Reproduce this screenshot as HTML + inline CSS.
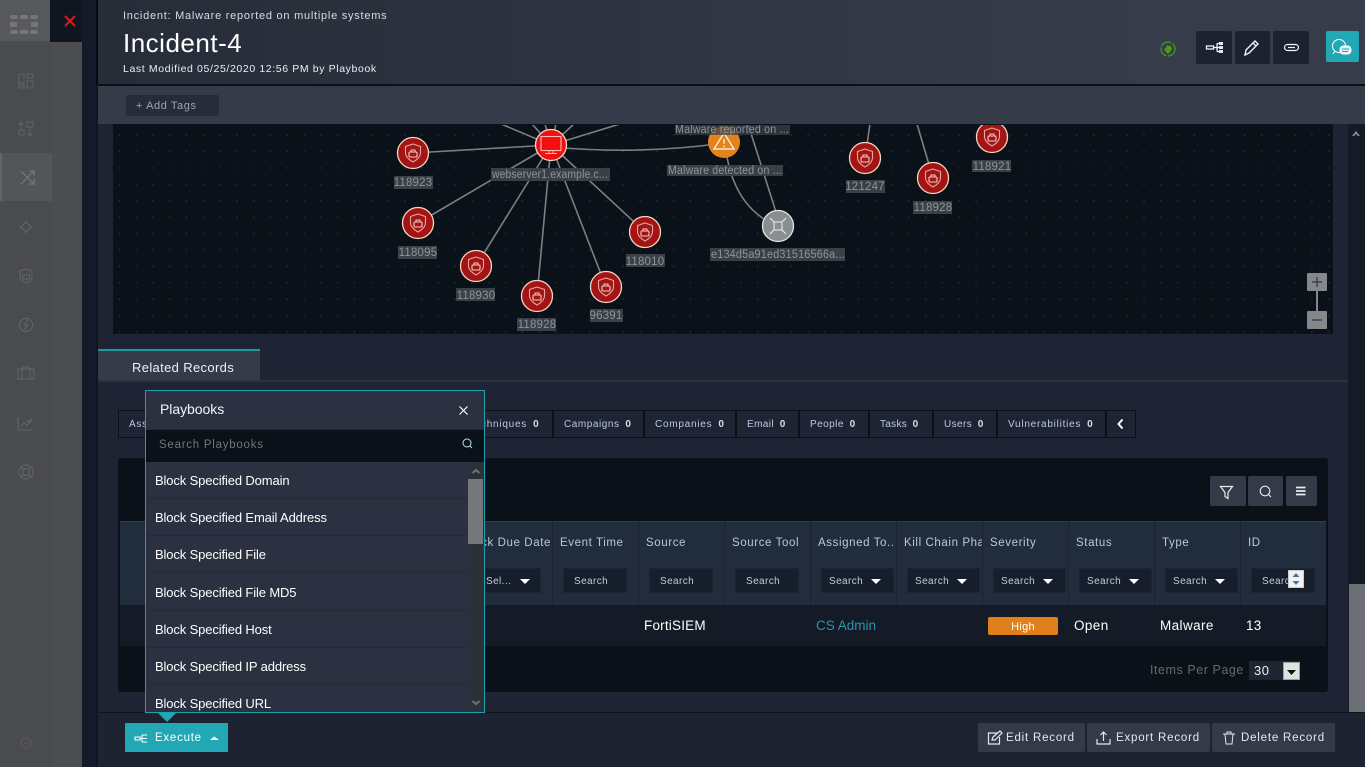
<!DOCTYPE html>
<html lang="en"><head><meta charset="utf-8"><title>Incident-4</title>
<style>
html,body{margin:0;padding:0;width:1365px;height:767px;overflow:hidden;background:#1e2433}
body{position:relative;font-family:"Liberation Sans",sans-serif;color:#fff}
.a{position:absolute}
.t{position:absolute;white-space:nowrap;line-height:1}
.box{position:absolute;box-sizing:border-box}
.chip{position:absolute;top:410px;height:28px;box-sizing:border-box;border:1px solid #0b1017;background:#1e2433;font-size:10px;letter-spacing:.75px;color:#b9cbdc;line-height:28px;padding-left:10px;white-space:nowrap}
.chip b{font-weight:bold;margin-left:2.500px;color:#d7dfe6}
.th{position:absolute;top:537px;font-size:11.500px;letter-spacing:.6px;color:#b9c9d8;white-space:nowrap;line-height:12px}
.inp{position:absolute;top:568px;height:25px;box-sizing:border-box;background:#171e2b;border:1px solid #1b2432;font-size:10px;letter-spacing:.4px;color:#c0ccd7;line-height:25px;white-space:nowrap;overflow:hidden}
.car{position:absolute;top:579px;width:0;height:0;border-left:5px solid transparent;border-right:5px solid transparent;border-top:5px solid #fff}
.sep{position:absolute;top:521px;width:1px;height:84px;background:#1a2331}
.pb{position:absolute;left:155px;font-size:13px;color:#fff;white-space:nowrap;line-height:16px;letter-spacing:-.13px}
.pl{position:absolute;left:147px;width:321px;height:1px;background:#242a36}
.ib{position:absolute;top:31px;height:33px;background:#1c2330;border-radius:2px}
.btn{position:absolute;top:723px;height:29px;background:#333a48;border-radius:2px;font-size:11.500px;letter-spacing:.8px;color:#e6e9ec;line-height:31px;white-space:nowrap}
.sq{position:absolute;top:476px;height:30px;background:#333a48;border-radius:2px}
svg{position:absolute;overflow:visible}
</style></head><body>

<!-- sidebar -->
<div class="box" style="left:0;top:0;width:82px;height:767px;background:#4a4b4d"></div>
<div class="box" style="left:0;top:0;width:50px;height:41px;background:#58595b"></div>
<div class="box" style="left:52px;top:41px;width:30px;height:726px;background:#4c4d4f"></div>
<div class="box" style="left:0;top:153px;width:52px;height:48px;background:#545557;border-left:2px solid #646567"></div>
<div class="box" style="left:50px;top:0;width:32px;height:42px;background:#0f1620"></div>
<div class="box" style="left:82px;top:0;width:15px;height:767px;background:#141b28"></div>
<div class="box" style="left:96px;top:0;width:2px;height:84px;background:#07090d"></div>
<div class="box" style="left:96px;top:84px;width:2px;height:683px;background:#10151e"></div>

<svg style="left:0;top:0" width="82" height="767" fill="none">
 <g fill="#757678">
  <rect x="10" y="15" width="8" height="4" rx="2"/><rect x="20" y="15" width="8" height="4" rx="1"/><rect x="30" y="15" width="8" height="4" rx="2"/>
  <rect x="10" y="22" width="7" height="5"/><rect x="31" y="22" width="7" height="5"/>
  <rect x="10" y="30" width="8" height="4" rx="2"/><rect x="20" y="30" width="8" height="4" rx="1"/><rect x="30" y="30" width="8" height="4" rx="2"/>
 </g>
 <path d="M65 16l10 10M75 16L65 26" stroke="#e01818" stroke-width="2"/>
 <g stroke="#5f6368" stroke-width="1">
  <rect x="19" y="74" width="5" height="9"/><rect x="27" y="74" width="6" height="4"/><rect x="19" y="85" width="5" height="3"/><rect x="27" y="81" width="6" height="7"/>
  <path d="M21 122v9M18.500 125l2.500-3 2.500 3M30 127v9M27.500 133l2.500 3 2.500-3"/><rect x="27" y="122" width="6" height="5"/><rect x="19" y="130" width="5" height="5"/>
 </g>
 <g stroke="#767779" stroke-width="1.200">
  <path d="M21 171l13 13M21 184l13-13M29 171h5v5M29 184h5v-5"/>
 </g>
 <g stroke="#64666a" stroke-width="1">
  <path d="M26 222l-5 5 5 5 5-5zM26 220v3M26 231v3M19 227h3M30 227h3"/>
  <path d="M26 269l6 2v6c0 3-3 5-6 6-3-1-6-3-6-6v-6z"/><rect x="22.500" y="275" width="7" height="4"/>
  <circle cx="26" cy="325" r="6.500"/><path d="M28 320l-4 5h4l-4 5"/>
  <rect x="18" y="369" width="16" height="10"/><path d="M22 369v10M30 369v10M23 369v-2h6v2"/>
  <path d="M18 417v13h15M20 427l4-4 3 2 5-5M27 420l2 2 3-4"/>
  <circle cx="26" cy="472" r="7"/><circle cx="26" cy="472" r="3.500"/><path d="M21 467l3 3M31 467l-3 3M21 477l3-3M31 477l-3-3"/>
  <circle cx="26" cy="743" r="5" stroke="#5a5b5e"/><path d="M24 743h4" stroke="#5a5b5e"/>
 </g>
</svg>

<!-- header -->
<div class="box" style="left:98px;top:0;width:1267px;height:84px;background:linear-gradient(90deg,#272c39,#2e3441 40%,#363c4a 85%)"></div>
<div class="box" style="left:98px;top:84px;width:1267px;height:2px;background:#0c1016"></div>
<div class="box" style="left:98px;top:86px;width:1267px;height:38px;background:#353b49"></div>
<div class="t" style="left:123px;top:11px;font-size:11px;letter-spacing:.75px;color:#d8dbdf">Incident: Malware reported on multiple systems</div>
<div class="t" style="left:123px;top:30px;font-size:26px;letter-spacing:.5px;color:#fff">Incident-4</div>
<div class="t" style="left:123px;top:64px;font-size:10.500px;letter-spacing:.62px;color:#eceef0">Last Modified 05/25/2020 12:56 PM by Playbook</div>
<div class="box" style="left:126px;top:95px;width:93px;height:21px;background:#262c39;border-radius:2px"></div>
<div class="t" style="left:136px;top:101px;font-size:11px;letter-spacing:.6px;color:#9ea4ad">+ Add Tags</div>

<svg style="left:1160px;top:41px" width="16" height="16" fill="none"><circle cx="8" cy="8" r="7" stroke="#4c9a1a" stroke-width="1.200" stroke-dasharray="11 1.500"/><path d="M4 8l2-1 1-3 2 1 2 0 1 3-2 3-2 2-2-2z" fill="#4c9a1a"/></svg>
<div class="ib" style="left:1196px;width:36px"></div>
<div class="ib" style="left:1235px;width:35px"></div>
<div class="ib" style="left:1273px;width:36px"></div>
<div class="a" style="left:1326px;top:31px;width:33px;height:31px;background:#22a8b4;border-radius:2px"></div>
<svg style="left:1196px;top:31px" width="170" height="33" fill="none" stroke="#f0f2f5">
 <g stroke-width="1.300"><rect x="10.500" y="15" width="7" height="3"/><path d="M17 16.500h4M21 12.500v8M21 12.500h2M21 16.500h2M21 20.500h2"/></g>
 <g fill="#e4e8ec" stroke="none"><rect x="23" y="11" width="4" height="3"/><rect x="23" y="15" width="4" height="3"/><rect x="23" y="19" width="4" height="3"/></g>
 <path d="M49 24l1-5 9-9 3 3-9 9zM57 12l3 3" stroke-width="1.400"/>
 <rect x="88.500" y="13.500" width="14" height="6" rx="3" stroke-width="1.200"/><path d="M92 16.500h7" stroke-width="1.200"/>
 <g stroke="#fff" stroke-width="1"><circle cx="143" cy="15" r="6.500"/><path d="M139 20l-2 3"/><rect x="144" y="15" width="11" height="8" rx="3.500" fill="#dff1f3"/><path d="M146 18h7M146 20.500h6" stroke="#22a8b4"/></g>
</svg>

<!-- graph -->
<div class="box" style="left:113px;top:124px;width:1220px;height:210px;background-color:#0b1118;background-image:radial-gradient(circle,#2c323b 0.6px,transparent 0.9px);background-size:16.800px 16.400px;background-position:-2px 3px"></div>
<div class="box" style="left:1348px;top:124px;width:17px;height:588px;background:#141b26"></div>
<div class="box" style="left:1349px;top:584px;width:16px;height:128px;background:#6d7074"></div>
<svg style="left:1350px;top:128px" width="12" height="10"><path d="M2 8l4-5 4 5H8L6 6 4 8z" fill="#8a8d92"/></svg>

<svg style="left:0;top:0" width="1365" height="340" fill="none">
 <defs><clipPath id="c"><rect x="113" y="125" width="1220" height="209"/></clipPath>
 <g id="n" fill="none"><circle r="15.500" fill="#a41414" stroke="#f1d6c4" stroke-width="1.300"/><path d="M0-9l7.500 2.500v6C7.500 3.500 4 7 0 9c-4-2-7.500-5.500-7.500-9.500v-6z" stroke="#dfa9a2" stroke-width="1.100"/><rect x="-4" y="-1" width="8" height="5" rx="1" stroke="#f0cdc6" stroke-width="1.100"/><path d="M-2-1v-2h4v2" stroke="#f0cdc6"/></g></defs>
 <g clip-path="url(#c)">
  <g stroke="#7d8083" stroke-width="1.600">
   <path d="M501 124L551 145M532 124L551 145M545 124L551 145M556 124L551 145M574 124L551 145M620 124L551 145"/>
   <path d="M413 153L551 145M418 223L551 145M476 266L551 145M537 296L551 145M606 287L551 145M645 232L551 145"/>
   <path d="M551 147Q640 155 724 143"/>
   <path d="M727 157Q735 200 764 219"/>
   <path d="M748 124L776 212"/>
   <path d="M870 124L865 158M917 124L933 178"/>
  </g>
  <g font-family="Liberation Sans,sans-serif" font-size="11.500" fill="#8f9499" text-anchor="middle" letter-spacing=".2">
   <g fill="#3a4048">
    <rect x="394" y="176" width="39" height="13"/><rect x="398" y="246" width="39" height="13"/><rect x="456" y="288" width="39" height="13"/><rect x="517" y="318" width="39" height="13"/><rect x="590" y="309" width="33" height="13"/><rect x="626" y="254" width="39" height="13"/>
    <rect x="491" y="168" width="119" height="13"/><rect x="667" y="165" width="116" height="11"/><rect x="710" y="248" width="135" height="13"/><rect x="846" y="180" width="39" height="13"/><rect x="913" y="201" width="39" height="13"/><rect x="972" y="160" width="39" height="12"/>
   </g>
   <use href="#n" x="413" y="153"/><use href="#n" x="418" y="223"/><use href="#n" x="476" y="266"/><use href="#n" x="537" y="296"/><use href="#n" x="606" y="287"/><use href="#n" x="645" y="232"/><use href="#n" x="865" y="158"/><use href="#n" x="933" y="178"/><use href="#n" x="992" y="137"/>
   <g transform="translate(551 145)" fill="none"><circle r="15.500" fill="#f01010" stroke="#f4d8c8" stroke-width="1.300"/><rect x="-10" y="-8.500" width="20" height="14" stroke="#f8bdb5" stroke-width="1.100"/><path d="M-2 6v2M2 6v2M-6 8.500h12" stroke="#f8bdb5"/></g>
   <g transform="translate(724 142)" fill="none"><circle r="16" fill="#e2831c"/><path d="M0-9L10 7H-10z" stroke="#fff3df" stroke-width="1.300"/><path d="M0-3v5M0 3.500v2" stroke="#fff3df" stroke-width="1.200"/></g>
   <rect x="675" y="124" width="115" height="11" fill="#3a4048" fill-opacity=".75"/>
   <g transform="translate(778 226)" fill="none"><circle r="15.500" fill="#8a8e90" stroke="#dde5e0" stroke-width="1.300"/><path d="M-4-4h8v8h-8zM-4-4l-4-4M4-4l4-4M-4 4l-4 4M4 4l4 4" stroke="#eef0f0"/></g>
   <text x="413" y="186">118923</text><text x="418" y="256">118095</text><text x="476" y="299">118930</text><text x="537" y="328">118928</text><text x="606" y="319">96391</text><text x="645" y="265">118010</text>
   <text x="550" y="178" textLength="116" lengthAdjust="spacingAndGlyphs">webserver1.example.c...</text>
   <text x="732" y="133" textLength="114" lengthAdjust="spacingAndGlyphs">Malware reported on ...</text>
   <text x="725" y="174" textLength="114" lengthAdjust="spacingAndGlyphs">Malware detected on ...</text>
   <text x="778" y="258" textLength="134" lengthAdjust="spacingAndGlyphs">e134d5a91ed31516566a...</text>
   <text x="865" y="190">121247</text><text x="933" y="211">118928</text><text x="992" y="170">118921</text>
  </g>
 </g>
 <rect x="1307" y="273" width="20" height="18" rx="1" fill="#85888b"/><rect x="1307" y="311" width="20" height="18" rx="1" fill="#85888b"/><rect x="1316" y="291" width="2" height="20" fill="#85888b"/>
 <path d="M1312 282h10M1317 277v10M1312 320h10" stroke="#2c3846" stroke-width="1.200"/>
</svg>

<!-- Tab -->
<div class="box" style="left:98px;top:349px;width:162px;height:32px;background:#353b49;border-top:2px solid #1e9aa6"></div>
<div class="t" style="left:132px;top:361px;font-size:13px;letter-spacing:.35px;color:#eef0f2">Related Records</div>
<div class="box" style="left:98px;top:380px;width:1250px;height:2px;background:#2b3240"></div>

<!-- chips -->
<div class="chip" style="left:118px;width:30px;padding-left:10px">Ass</div>
<div class="chip" style="left:440px;width:113px;padding-left:40px">chniques <b>0</b></div>
<div class="chip" style="left:553px;width:91px;letter-spacing:.55px">Campaigns <b>0</b></div>
<div class="chip" style="left:644px;width:92px">Companies <b>0</b></div>
<div class="chip" style="left:736px;width:63px;letter-spacing:.4px">Email <b>0</b></div>
<div class="chip" style="left:799px;width:70px;letter-spacing:.45px">People <b>0</b></div>
<div class="chip" style="left:869px;width:64px;letter-spacing:.3px">Tasks <b>0</b></div>
<div class="chip" style="left:933px;width:64px;letter-spacing:.4px">Users <b>0</b></div>
<div class="chip" style="left:997px;width:109px">Vulnerabilities <b>0</b></div>
<div class="chip" style="left:1106px;width:30px"></div>
<svg style="left:1116px;top:418px" width="10" height="12"><path d="M6.500 1.500L2.500 6l4 4.500" stroke="#fff" stroke-width="2" fill="none"/></svg>

<!-- table -->
<div class="box" style="left:118px;top:458px;width:1210px;height:234px;background:#0b1118;border-radius:3px"></div>
<div class="box" style="left:120px;top:521px;width:1206px;height:84px;background:#212c3c;border-top:1px solid #2e3d50"></div>
<div class="box" style="left:120px;top:605px;width:1206px;height:41px;background:#141a26"></div>
<div class="sep" style="left:552px"></div><div class="sep" style="left:638px"></div><div class="sep" style="left:724px"></div><div class="sep" style="left:810px"></div><div class="sep" style="left:896px"></div><div class="sep" style="left:982px"></div><div class="sep" style="left:1068px"></div><div class="sep" style="left:1154px"></div><div class="sep" style="left:1240px"></div>

<div class="sq" style="left:1210px;width:36px"></div><div class="sq" style="left:1248px;width:35px"></div><div class="sq" style="left:1286px;width:31px"></div>
<svg style="left:1210px;top:476px" width="110" height="30" fill="none" stroke="#e8ecef">
 <path d="M10.500 10.500h12l-4.500 6v6l-3-2v-4z" stroke-width="1.200"/>
 <circle cx="55" cy="15" r="4.800" stroke-width="1.100"/><path d="M58.500 18.500l2.500 2.500" stroke-width="1.100"/>
 <path d="M86 11.500h9.500M86 15h9.500M86 18.500h9.500" stroke-width="1.700"/>
</svg>

<div class="th" style="left:485px;width:66px;overflow:hidden;direction:rtl;text-align:left">Attack Due Date</div>
<div class="th" style="left:560px">Event Time</div>
<div class="th" style="left:646px">Source</div>
<div class="th" style="left:732px">Source Tool</div>
<div class="th" style="left:818px;width:76px;overflow:hidden">Assigned To..</div>
<div class="th" style="left:904px;width:78px;overflow:hidden">Kill Chain Phase</div>
<div class="th" style="left:990px">Severity</div>
<div class="th" style="left:1076px">Status</div>
<div class="th" style="left:1162px">Type</div>
<div class="th" style="left:1248px">ID</div>

<div class="inp" style="left:485px;width:56px;padding-left:0">Sel...</div><div class="car" style="left:520px"></div>
<div class="inp" style="left:563px;width:64px;padding-left:10px">Search</div>
<div class="inp" style="left:649px;width:64px;padding-left:10px">Search</div>
<div class="inp" style="left:735px;width:64px;padding-left:10px">Search</div>
<div class="inp" style="left:821px;width:73px;padding-left:7px">Search</div><div class="car" style="left:871px"></div>
<div class="inp" style="left:907px;width:73px;padding-left:7px">Search</div><div class="car" style="left:957px"></div>
<div class="inp" style="left:993px;width:73px;padding-left:7px">Search</div><div class="car" style="left:1043px"></div>
<div class="inp" style="left:1079px;width:73px;padding-left:7px">Search</div><div class="car" style="left:1129px"></div>
<div class="inp" style="left:1165px;width:73px;padding-left:7px">Search</div><div class="car" style="left:1215px"></div>
<div class="inp" style="left:1251px;width:64px;padding-left:10px">Search</div>
<div class="box" style="left:1288px;top:570px;width:16px;height:18px;background:#f1f1f1;border:1px solid #ccc"></div>
<svg style="left:1288px;top:570px" width="16" height="18"><path d="M8 3l3.500 4h-7z" fill="#3f76a8"/><path d="M8 15l3.500-4h-7z" fill="#3f76a8"/></svg>

<div class="t" style="left:644px;top:619px;font-size:13.500px;letter-spacing:.2px;color:#fff">FortiSIEM</div>
<div class="t" style="left:816px;top:619px;font-size:13.500px;letter-spacing:0;color:#2a93aa">CS Admin</div>
<div class="box" style="left:988px;top:617px;width:70px;height:18px;background:#e0801b;border-radius:2px;text-align:center;font-size:11px;line-height:21px;letter-spacing:.3px">High</div>
<div class="t" style="left:1074px;top:619px;font-size:13.500px;letter-spacing:.4px">Open</div>
<div class="t" style="left:1160px;top:619px;font-size:13.500px;letter-spacing:.4px">Malware</div>
<div class="t" style="left:1246px;top:619px;font-size:13.500px;letter-spacing:.3px">13</div>

<div class="t" style="left:1150px;top:664px;font-size:12.500px;letter-spacing:.55px;color:#656a70">Items Per Page</div>
<div class="box" style="left:1249px;top:661px;width:51px;height:19px;background:#1e2533"></div>
<div class="t" style="left:1254px;top:664px;font-size:13px;letter-spacing:.5px;color:#eef0f2">30</div>
<div class="box" style="left:1283px;top:662px;width:17px;height:18px;background:#dfe3df;border:1px solid #9aa0a0"></div>
<svg style="left:1283px;top:662px" width="17" height="18"><path d="M4 8h9l-4.500 5z" fill="#111"/></svg>

<!-- bottom bar -->
<div class="box" style="left:98px;top:712px;width:1267px;height:55px;background:#1d2331;border-top:1px solid #10151d"></div>
<div class="box" style="left:125px;top:723px;width:103px;height:29px;background:#22a8b4;border-radius:1px"></div>
<svg style="left:125px;top:723px" width="103" height="29" fill="none"><path d="M10 14h5v3h-5zM15 15.500h2M17 12v7M17 12h5M17 15.500h5M17 19h5" stroke="#fff" stroke-width="1.100"/><path d="M85 17l4-3.500 5 3.500z" fill="#fff"/></svg>
<div class="t" style="left:155px;top:733px;font-size:11.500px;letter-spacing:.75px;color:#fff">Execute</div>
<svg style="left:157px;top:712px" width="20" height="12"><path d="M0 0h20l-10 10z" fill="#22a8b4"/></svg>

<div class="btn" style="left:978px;width:107px;padding-left:28px;box-sizing:border-box">Edit Record</div>
<div class="btn" style="left:1087px;width:123px;padding-left:29px;box-sizing:border-box">Export Record</div>
<div class="btn" style="left:1212px;width:123px;padding-left:29px;box-sizing:border-box">Delete Record</div>
<svg style="left:960px;top:723px" width="405" height="29" fill="none" stroke="#e6e9ec" stroke-width="1.200">
 <path d="M37 10h-8.500v11h11v-7M32 17l1-3 7-6 2 2-7 7z"/>
 <path d="M137 16v5h13v-5M143.500 18v-9M140.500 12l3-3 3 3"/>
 <path d="M263 11h12M265 11l1 10h6l1-10M267 11v-2h4v2" stroke-width="1"/>
</svg>

<!-- popup -->
<div class="box" style="left:145px;top:390px;width:340px;height:323px;background:#2b3140;border:1px solid #1ea2ad;overflow:hidden"></div>
<div class="t" style="left:160px;top:402px;font-size:14px;color:#f4f5f7;letter-spacing:-.05px">Playbooks</div>
<svg style="left:458px;top:405px" width="12" height="12"><path d="M1.500 1.500l8 8M9.500 1.500l-8 8" stroke="#fff" stroke-width="1.200"/></svg>
<div class="box" style="left:146px;top:429px;width:338px;height:33px;background:#0b1118;border-top:1px solid #232934"></div>
<div class="t" style="left:159px;top:440px;font-size:11.500px;letter-spacing:.75px;color:#72767d">Search Playbooks</div>
<svg style="left:461px;top:437px" width="13" height="13" fill="none" stroke="#bfe0e8"><circle cx="6" cy="6" r="4"/><path d="M9 9l2 2"/></svg>
<div class="box" style="left:468px;top:462px;width:16px;height:250px;background:#2c3039"></div>
<div class="box" style="left:468px;top:479px;width:15px;height:65px;background:#75777a"></div>
<svg style="left:468px;top:462px" width="16" height="250" fill="none" stroke="#6f7379" stroke-width="2"><path d="M4.500 11l3.500-3 3.500 3M4.500 239l3.500 3 3.500-3"/></svg>

<div class="pb" style="top:473px">Block Specified Domain</div><div class="pl" style="top:498px"></div>
<div class="pb" style="top:510px">Block Specified Email Address</div><div class="pl" style="top:535px"></div>
<div class="pb" style="top:547px">Block Specified File</div><div class="pl" style="top:572px"></div>
<div class="pb" style="top:585px">Block Specified File MD5</div><div class="pl" style="top:610px"></div>
<div class="pb" style="top:622px">Block Specified Host</div><div class="pl" style="top:647px"></div>
<div class="pb" style="top:659px">Block Specified IP address</div><div class="pl" style="top:684px"></div>
<div class="pb" style="top:696px;height:16px;overflow:hidden">Block Specified URL</div>

</body></html>
